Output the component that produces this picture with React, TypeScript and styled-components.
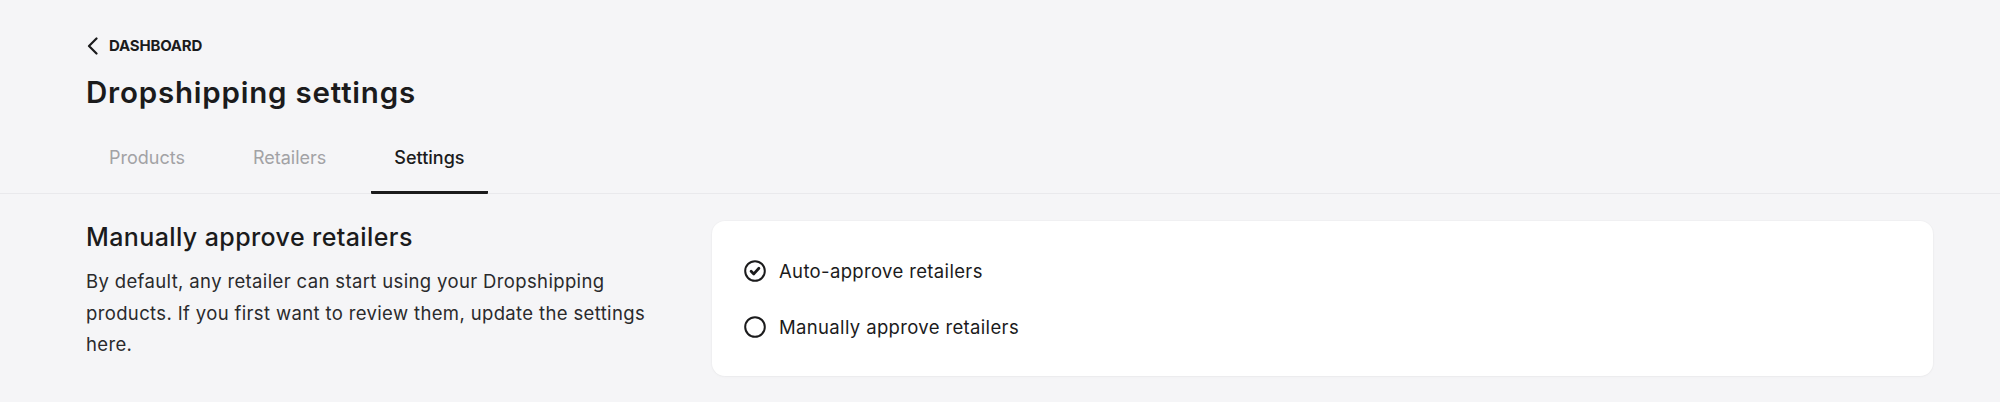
import React from "react";
import styled, { createGlobalStyle } from "styled-components";

const GlobalStyle = createGlobalStyle`
  html, body {
    margin: 0;
    padding: 0;
    background: #f5f5f7;
  }
  body {
    font-family: 'Inter', 'Liberation Sans', sans-serif;
    color: #1b1b1c;
    -webkit-font-smoothing: antialiased;
  }
`;

const Page = styled.div`
  min-height: 402px;
  background: #f5f5f7;
`;

const Header = styled.header`
  padding: 36px 67px 0 86px;
  border-bottom: 1px solid #e9e9ec;
`;

const BackLink = styled.a`
  display: flex;
  align-items: center;
  gap: 11px;
  height: 20px;
  margin-left: 1px;
  font-size: 15px;
  font-weight: 700;
  line-height: 20px;
  letter-spacing: -0.2px;
  text-transform: uppercase;
  color: #1b1b1c;
  text-decoration: none;
  cursor: pointer;
`;

const Title = styled.h1`
  margin: 18px 0 0;
  font-size: 29.5px;
  font-weight: 600;
  line-height: 36px;
  letter-spacing: 0.8px;
`;

const TabBar = styled.nav`
  display: flex;
  gap: 22px;
  margin-top: 36px;
`;

const Tab = styled.button<{ $active?: boolean }>`
  margin: 0 0 -1px;
  padding: 0 23px 21px;
  border: none;
  border-bottom: 3px solid ${(p) => (p.$active ? "#1b1b1c" : "transparent")};
  border-radius: 1px;
  background: none;
  font-family: inherit;
  font-size: 18px;
  line-height: 24px;
  font-weight: ${(p) => (p.$active ? 500 : 400)};
  color: ${(p) => (p.$active ? "#1b1b1c" : "#a2a2a5")};
  cursor: pointer;
`;

const Content = styled.main`
  display: flex;
  align-items: flex-start;
  gap: 51px;
  padding: 27px 67px 0 86px;
`;

const Intro = styled.section`
  flex: 0 0 575px;
`;

const SectionTitle = styled.h2`
  margin: 0;
  font-size: 25px;
  font-weight: 500;
  line-height: 32px;
  letter-spacing: 0.4px;
`;

const Description = styled.p`
  margin: 13px 0 0;
  font-size: 18.5px;
  line-height: 31.5px;
  letter-spacing: 0.36px;
  color: #2a2a2c;
`;

const Card = styled.div`
  flex: 1;
  display: flex;
  flex-direction: column;
  gap: 32px;
  padding: 38px 32px 37px;
  background: #ffffff;
  border-radius: 13px;
  box-shadow: 0 0 0 1px rgba(0, 0, 0, 0.015), 0 1px 3px rgba(0, 0, 0, 0.03);
`;

const Option = styled.label`
  display: flex;
  align-items: center;
  gap: 13px;
  height: 24px;
  font-size: 18.5px;
  line-height: 24px;
  letter-spacing: 0.35px;
  color: #1b1b1c;
  cursor: pointer;
`;

function Chevron() {
  return (
    <svg width="11" height="18" viewBox="0 0 11 18" fill="none">
      <polyline
        points="9.5,1.5 2,9 9.5,16.5"
        stroke="#1b1b1c"
        strokeWidth="2.2"
        strokeLinecap="round"
        strokeLinejoin="round"
      />
    </svg>
  );
}

function RadioMark({ checked }: { checked?: boolean }) {
  return (
    <svg width="22" height="22" viewBox="0 0 22 22" fill="none">
      <circle cx="11" cy="11" r="9.8" stroke="#1b1b1c" strokeWidth="2" />
      {checked && (
        <polyline
          points="7.1,11.2 9.8,13.9 14.9,8.3"
          stroke="#1b1b1c"
          strokeWidth="2.8"
          strokeLinecap="round"
          strokeLinejoin="round"
        />
      )}
    </svg>
  );
}

const options = [
  { label: "Auto-approve retailers", checked: true },
  { label: "Manually approve retailers", checked: false },
];

export default function App() {
  return (
    <Page>
      <GlobalStyle />
      <Header>
        <BackLink>
          <Chevron />
          Dashboard
        </BackLink>
        <Title>Dropshipping settings</Title>
        <TabBar>
          <Tab>Products</Tab>
          <Tab>Retailers</Tab>
          <Tab $active>Settings</Tab>
        </TabBar>
      </Header>
      <Content>
        <Intro>
          <SectionTitle>Manually approve retailers</SectionTitle>
          <Description>
            By default, any retailer can start using your Dropshipping products. If you first want
            to review them, update the settings here.
          </Description>
        </Intro>
        <Card>
          {options.map((o) => (
            <Option key={o.label}>
              <RadioMark checked={o.checked} />
              {o.label}
            </Option>
          ))}
        </Card>
      </Content>
    </Page>
  );
}
